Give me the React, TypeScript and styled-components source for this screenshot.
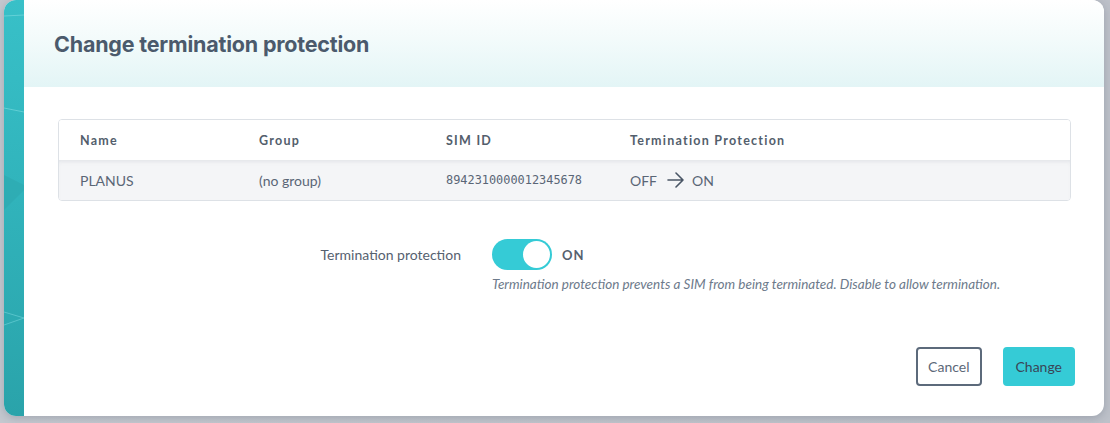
import React, { useState } from "react";
import styled, { createGlobalStyle } from "styled-components";

const GlobalStyle = createGlobalStyle`
  html, body {
    margin: 0;
    padding: 0;
    background: #bfc3cb;
  }
  * {
    box-sizing: border-box;
  }
`;

const Backdrop = styled.div`
  width: 1110px;
  height: 423px;
  padding: 0 6px 7px 4px;
  background: linear-gradient(90deg, #c4c8cf 0%, #bdc1c9 100%);
  font-family: Lato, "Noto Sans", sans-serif;
`;

const Modal = styled.div`
  display: flex;
  height: 100%;
  border-radius: 12px;
  overflow: hidden;
  background: #fff;
  box-shadow: 0 2px 8px rgba(60, 70, 90, 0.25);
`;

const Strip = styled.div`
  width: 20px;
  flex: none;
  background: linear-gradient(180deg, #38c0c8 0%, #31b4bc 45%, #2aa3aa 100%);
  overflow: hidden;
`;

const Panel = styled.div`
  flex: 1;
  display: flex;
  flex-direction: column;
  min-width: 0;
`;

const Header = styled.header`
  height: 87px;
  display: flex;
  align-items: center;
  padding: 0 30px;
  background: linear-gradient(180deg, #ffffff 0%, #f3fbfb 45%, #e3f5f6 100%);
`;

const Title = styled.h1`
  margin: 0;
  font-family: Inter, "Liberation Sans", sans-serif;
  font-size: 21.5px;
  font-weight: 700;
  color: #4b5a6c;
  letter-spacing: -0.2px;
`;

const Body = styled.div`
  flex: 1;
  display: flex;
  flex-direction: column;
  padding: 32px 33px 30px 34px;
`;

const Table = styled.div`
  border: 1px solid #dde1e6;
  border-radius: 4px;
  overflow: hidden;
`;

const Row = styled.div<{ $head?: boolean }>`
  display: grid;
  grid-template-columns: 179px 187px 184px 1fr;
  align-items: center;
  padding-left: 21px;
  height: 40px;
  background: ${(p) => (p.$head ? "#fff" : "#f4f5f7")};
  box-shadow: ${(p) => (p.$head ? "none" : "inset 0 4px 5px -3px rgba(90, 100, 120, 0.14)")};
`;

const HeadCell = styled.div`
  font-size: 12.5px;
  font-weight: 700;
  letter-spacing: 1.25px;
  color: #535e6c;
`;

const Cell = styled.div<{ $mono?: boolean }>`
  display: flex;
  align-items: center;
  gap: 10px;
  font-family: ${(p) => (p.$mono ? '"DejaVu Sans Mono", monospace' : 'Lato, "Noto Sans", sans-serif')};
  font-size: ${(p) => (p.$mono ? "11.9px" : "14px")};
  color: #5a6676;
`;

const Arrow = styled.svg`
  flex: none;
  margin-right: -2px;
`;

const Field = styled.div`
  display: grid;
  grid-template-columns: 403px 1fr;
  column-gap: 31px;
  margin-top: 38px;
`;

const Label = styled.label`
  text-align: right;
  font-size: 14px;
  color: #56616f;
  line-height: 32px;
`;

const Control = styled.div`
  display: flex;
  flex-direction: column;
  gap: 6px;
`;

const SwitchLine = styled.div`
  display: flex;
  align-items: center;
  gap: 10px;
`;

const Track = styled.button<{ $on: boolean }>`
  position: relative;
  width: 60px;
  height: 31px;
  padding: 0;
  border: none;
  border-radius: 16px;
  background: ${(p) => (p.$on ? "#35cbd6" : "#c9ced6")};
  cursor: pointer;
`;

const Knob = styled.span<{ $on: boolean }>`
  position: absolute;
  top: 2px;
  left: ${(p) => (p.$on ? "31px" : "2px")};
  width: 27px;
  height: 27px;
  border-radius: 50%;
  background: #fff;
`;

const State = styled.span`
  font-size: 13px;
  font-weight: 700;
  letter-spacing: 1px;
  color: #56616f;
`;

const Help = styled.p`
  margin: 0;
  font-size: 13.5px;
  font-style: italic;
  color: #6d7a8b;
`;

const Footer = styled.div`
  margin-top: auto;
  display: flex;
  justify-content: flex-end;
  gap: 21px;
  margin-right: -4px;
`;

const Button = styled.button<{ $primary?: boolean }>`
  height: 39px;
  padding: 0 ${(p) => (p.$primary ? "11px" : "10px")};
  border-radius: 4px;
  border: 2px solid ${(p) => (p.$primary ? "#35cbd6" : "#5c6a7b")};
  background: ${(p) => (p.$primary ? "#35cbd6" : "#fff")};
  color: ${(p) => (p.$primary ? "#3a4656" : "#5c6878")};
  font-family: Lato, "Noto Sans", sans-serif;
  font-size: 14px;
  cursor: pointer;
`;

const App: React.FC = () => {
  const [on, setOn] = useState(true);
  return (
    <>
      <GlobalStyle />
      <Backdrop>
        <Modal>
          <Strip>
            <svg width="20" height="416" viewBox="0 0 20 416">
              <line x1="0" y1="16" x2="20" y2="15" stroke="#7fdde2" strokeWidth="1" opacity="0.6" />
              <line x1="0" y1="108" x2="20" y2="112" stroke="#7fdde2" strokeWidth="1" opacity="0.6" />
              <polygon points="0,175 20,185 20,190 0,210" fill="#2ea9b0" opacity="0.7" />
              <line x1="0" y1="312" x2="20" y2="318" stroke="#7fdde2" strokeWidth="1" opacity="0.5" />
              <line x1="0" y1="325" x2="20" y2="318" stroke="#7fdde2" strokeWidth="1" opacity="0.5" />
            </svg>
          </Strip>
          <Panel>
            <Header>
              <Title>Change termination protection</Title>
            </Header>
            <Body>
              <Table>
                <Row $head>
                  <HeadCell>Name</HeadCell>
                  <HeadCell>Group</HeadCell>
                  <HeadCell>SIM ID</HeadCell>
                  <HeadCell>Termination Protection</HeadCell>
                </Row>
                <Row>
                  <Cell>PLANUS</Cell>
                  <Cell>(no group)</Cell>
                  <Cell $mono>8942310000012345678</Cell>
                  <Cell>
                    OFF
                    <Arrow width="17" height="16" viewBox="0 0 17 16" fill="none">
                      <path d="M1 8h15M9 1l7 7-7 7" stroke="#4a5666" strokeWidth="1.6" strokeLinecap="round" strokeLinejoin="round" />
                    </Arrow>
                    ON
                  </Cell>
                </Row>
              </Table>
              <Field>
                <Label>Termination protection</Label>
                <Control>
                  <SwitchLine>
                    <Track $on={on} onClick={() => setOn(!on)} aria-pressed={on}>
                      <Knob $on={on} />
                    </Track>
                    <State>{on ? "ON" : "OFF"}</State>
                  </SwitchLine>
                  <Help>
                    Termination protection prevents a SIM from being terminated. Disable to allow termination.
                  </Help>
                </Control>
              </Field>
              <Footer>
                <Button>Cancel</Button>
                <Button $primary>Change</Button>
              </Footer>
            </Body>
          </Panel>
        </Modal>
      </Backdrop>
    </>
  );
};

export default App;
